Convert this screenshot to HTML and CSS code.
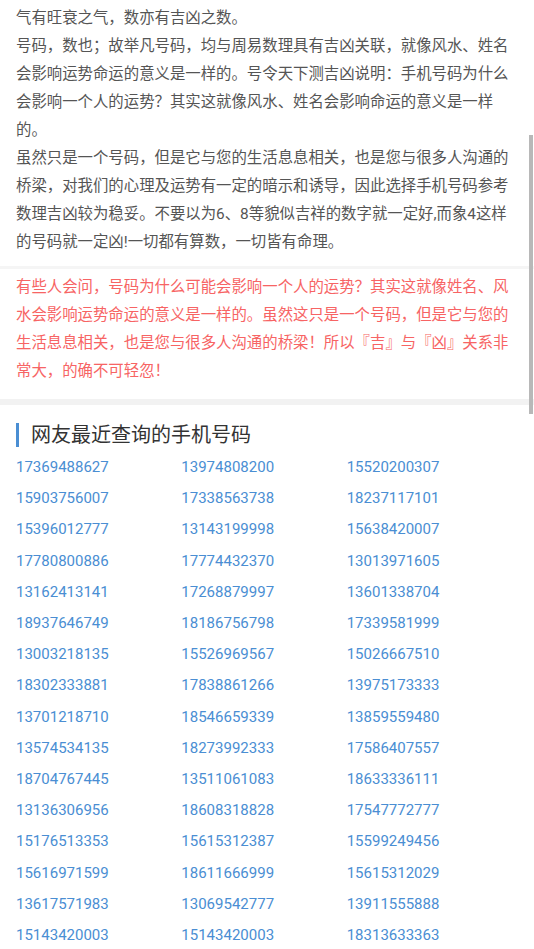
FILE: index.html
```html
<!DOCTYPE html>
<html lang="zh-CN">
<head>
  <meta charset="UTF-8" />
  <meta name="viewport" content="width=device-width, initial-scale=1.0"/>
  <title>手机号码吉凶</title>
  <link rel="stylesheet" href="styles.css">
</head>
<body>

<!-- Intro text -->
<div class="intro">
  <p>气有旺衰之气，数亦有吉凶之数。</p>
  <p>号码，数也；故举凡号码，均与周易数理具有吉凶关联，就像风水、姓名会影响运势命运的意义是一样的。号令天下测吉凶说明：手机号码为什么会影响一个人的运势？其实这就像风水、姓名会影响命运的意义是一样的。</p>
  <p>虽然只是一个号码，但是它与您的生活息息相关，也是您与很多人沟通的桥梁，对我们的心理及运势有一定的暗示和诱导，因此选择手机号码参考数理吉凶较为稳妥。不要以为6、8等貌似吉祥的数字就一定好,而象4这样的号码就一定凶!一切都有算数，一切皆有命理。</p>
</div>

<!-- Notice -->
<div class="notice">
  <p>有些人会问，号码为什么可能会影响一个人的运势？其实这就像姓名、风水会影响运势命运的意义是一样的。虽然这只是一个号码，但是它与您的生活息息相关，也是您与很多人沟通的桥梁！所以『吉』与『凶』关系非常大，的确不可轻忽！</p>
</div>

<!-- Recent queries -->
<div class="recent">
  <h2 class="recent-title">网友最近查询的手机号码</h2>
  <div class="number-grid">
    <a href="#">17369488627</a><a href="#">13974808200</a><a href="#">15520200307</a>
    <a href="#">15903756007</a><a href="#">17338563738</a><a href="#">18237117101</a>
    <a href="#">15396012777</a><a href="#">13143199998</a><a href="#">15638420007</a>
    <a href="#">17780800886</a><a href="#">17774432370</a><a href="#">13013971605</a>
    <a href="#">13162413141</a><a href="#">17268879997</a><a href="#">13601338704</a>
    <a href="#">18937646749</a><a href="#">18186756798</a><a href="#">17339581999</a>
    <a href="#">13003218135</a><a href="#">15526969567</a><a href="#">15026667510</a>
    <a href="#">18302333881</a><a href="#">17838861266</a><a href="#">13975173333</a>
    <a href="#">13701218710</a><a href="#">18546659339</a><a href="#">13859559480</a>
    <a href="#">13574534135</a><a href="#">18273992333</a><a href="#">17586407557</a>
    <a href="#">18704767445</a><a href="#">13511061083</a><a href="#">18633336111</a>
    <a href="#">13136306956</a><a href="#">18608318828</a><a href="#">17547772777</a>
    <a href="#">15176513353</a><a href="#">15615312387</a><a href="#">15599249456</a>
    <a href="#">15616971599</a><a href="#">18611666999</a><a href="#">15615312029</a>
    <a href="#">13617571983</a><a href="#">13069542777</a><a href="#">13911555888</a>
    <a href="#">15143420003</a><a href="#">15143420003</a><a href="#">18313633363</a>
  </div>
</div>

<!-- scroll indicator -->
<div class="scroll-thumb"></div>

</body>
</html>
```

FILE: styles.css
```css
body {
  font-family: Roboto, "Noto Sans CJK SC", sans-serif;
  margin: 0;
  padding: 0;
  background: #fff;
  color: #555;
}
p {
  margin: 0;
}
.intro {
  padding: 4px 22px 10px 16px;
  font-size: 15.4px;
  line-height: 28px;
  border-bottom: 3px solid #f5f5f5;
}
.notice {
  padding: 4px 22px 14px 16px;
  font-size: 15.4px;
  line-height: 28px;
  color: #f76464;
  border-bottom: 6px solid #f2f2f2;
}
.recent {
  padding: 16px 22px 0 16px;
}
.recent-title {
  margin: 0;
  font-size: 20px;
  font-weight: normal;
  line-height: 28px;
  color: #333;
  display: flex;
  align-items: center;
  gap: 12px;
}
.recent-title::before {
  content: "";
  width: 3px;
  height: 24px;
  background: #4a8ed3;
}
.number-grid {
  display: grid;
  grid-template-columns: repeat(3, 1fr);
  margin-top: 3px;
}
.number-grid a {
  font-size: 15px;
  line-height: 31.2px;
  color: #4a8ed3;
  text-decoration: none;
}
.scroll-thumb {
  position: fixed;
  right: 1px;
  top: 135px;
  width: 4px;
  height: 279px;
  background: #b8b8b8;
}
```
